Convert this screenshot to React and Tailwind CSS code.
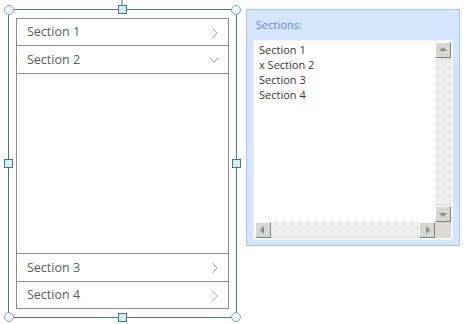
import React from "react";

const FONT = { fontFamily: '"Open Sans", "Noto Sans", sans-serif' };

function Chevron({ open }) {
  return open ? (
    <svg width="12" height="8" viewBox="0 0 12 8" className="text-[#a0a0a0]">
      <path d="M1 1.5 L6 6 L11 1.5" fill="none" stroke="currentColor" strokeWidth="1" />
    </svg>
  ) : (
    <svg width="8" height="12" viewBox="0 0 8 12" className="text-[#a0a0a0]">
      <path d="M1.5 1 L6 6 L1.5 11" fill="none" stroke="currentColor" strokeWidth="1" />
    </svg>
  );
}

function Row({ label, open, className }) {
  return (
    <div className={`flex items-center justify-between pl-[10px] pt-[1px] ${open ? "pr-[8px]" : "pr-[9px]"} text-[12.5px] text-[#5a5a5a] ${className}`}>
      <span>{label}</span>
      <Chevron open={open} />
    </div>
  );
}

function Circle({ className }) {
  return (
    <div
      className={`absolute w-[10px] h-[10px] rounded-full border border-[#8ea3b6] bg-[radial-gradient(circle_at_40%_35%,#ffffff,#cfeef2)] ${className}`}
    />
  );
}

function Square({ className }) {
  return (
    <div className={`absolute w-[9px] h-[9px] border border-[#4d6f96] bg-[#d3f0f7] ${className}`} />
  );
}

function ScrollButton({ dir }) {
  const arrows = {
    up: "M3 8 L7 4 L11 8 Z",
    down: "M3 6 L7 10 L11 6 Z",
    left: "M8 3 L4 7 L8 11 Z",
    right: "M6 3 L10 7 L6 11 Z",
  };
  return (
    <div className="w-[16px] h-[16px] bg-[#d8d6d1] border border-t-white border-l-white border-r-[#808080] border-b-[#808080] flex items-center justify-center">
      <svg width="14" height="14" viewBox="0 0 14 14">
        <path d={arrows[dir]} fill="#8c8c8c" />
      </svg>
    </div>
  );
}

const TRACK =
  "bg-[repeating-conic-gradient(#e0e0e0_0%_25%,#ffffff_0%_50%)] bg-[length:2px_2px]";

export default function App() {
  return (
    <div className="w-[467px] h-[324px] bg-white flex items-start pt-[9px] pl-[8px]" style={FONT}>
      {/* selected accordion on canvas */}
      <div className="relative w-[229px] h-[309px] border border-[#4d6f96] px-[7px] py-[8px]">
        <div className="absolute left-[112px] -top-[10px] w-[2px] h-[6px] bg-[#9cb1c8]" />
        <Circle className="-left-[5px] -top-[5px]" />
        <Circle className="-right-[5px] -top-[5px]" />
        <Circle className="-left-[5px] -bottom-[5px]" />
        <Circle className="-right-[5px] -bottom-[5px]" />
        <Square className="left-[109px] -top-[5px]" />
        <Square className="left-[109px] -bottom-[5px]" />
        <Square className="-left-[5px] top-[149px]" />
        <Square className="-right-[5px] top-[149px]" />

        <div className="h-full border border-[#8a8a8a] flex flex-col bg-white">
          <Row label="Section 1" className="h-[26px]" />
          <Row label="Section 2" open className="h-[28px] border-t border-[#8a8a8a]" />
          <div className="flex-1 border-t border-[#8a8a8a]" />
          <Row label="Section 3" className="h-[28px] border-t border-[#8a8a8a]" />
          <Row label="Section 4" className="h-[27px] border-t border-[#8a8a8a]" />
        </div>
      </div>

      {/* properties panel */}
      <div className="ml-[9px] w-[214px] h-[237px] border border-[#a6c3ea] bg-[#d5e5fc] flex flex-col px-[6px] pb-[5px]">
        <div className="h-[30px] flex items-center pl-[3px] text-[11px] text-[#6a83d4]">Sections:</div>
        <div className="flex-1 bg-white border border-[#eef3fa] p-[1px] grid grid-cols-[1fr_16px] grid-rows-[1fr_16px]">
          <div className="pl-[4px] text-[11px] leading-[15px] text-[#3a3330]">
            <div>Section 1</div>
            <div>x Section 2</div>
            <div>Section 3</div>
            <div>Section 4</div>
          </div>
          <div className={`flex flex-col justify-between ${TRACK}`}>
            <ScrollButton dir="up" />
            <ScrollButton dir="down" />
          </div>
          <div className={`flex justify-between ${TRACK}`}>
            <ScrollButton dir="left" />
            <ScrollButton dir="right" />
          </div>
          <div className="bg-[#dcdad5]" />
        </div>
      </div>
    </div>
  );
}
